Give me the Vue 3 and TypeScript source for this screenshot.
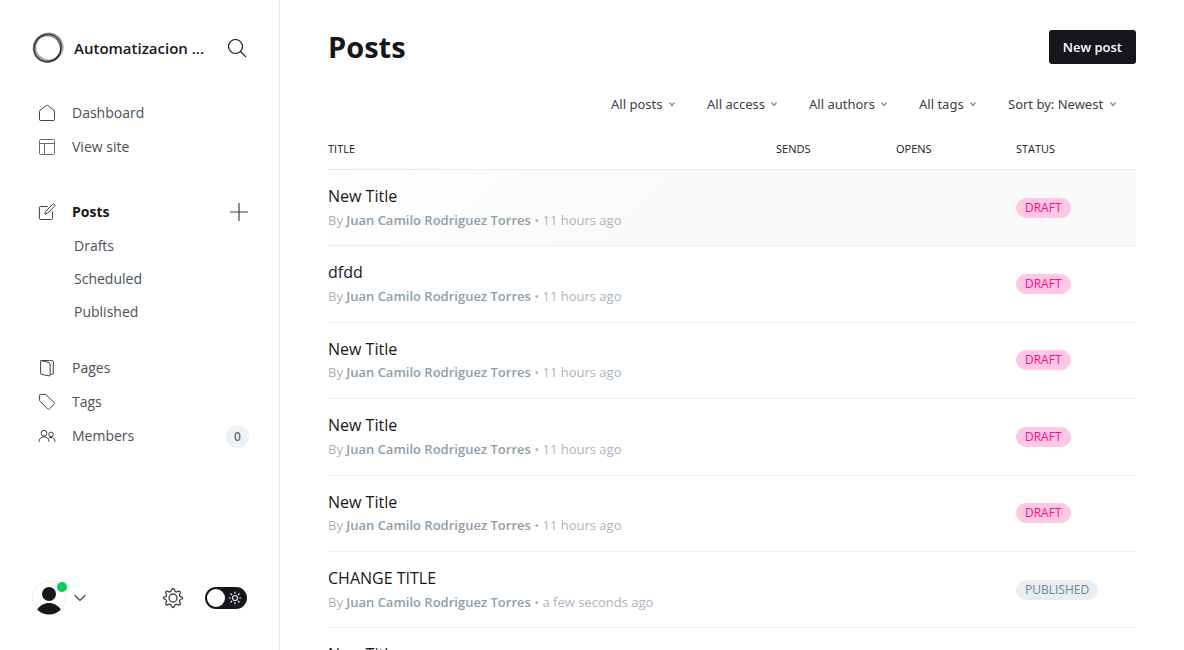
<script setup lang="ts">
import { ref } from 'vue'

interface Post {
  title: string
  author: string
  updated: string
  status: 'Draft' | 'Published'
  active?: boolean
}

const author = 'Juan Camilo Rodriguez Torres'

const posts: Post[] = [
  { title: 'New Title', author, updated: '11 hours ago', status: 'Draft', active: true },
  { title: 'dfdd', author, updated: '11 hours ago', status: 'Draft' },
  { title: 'New Title', author, updated: '11 hours ago', status: 'Draft' },
  { title: 'New Title', author, updated: '11 hours ago', status: 'Draft' },
  { title: 'New Title', author, updated: '11 hours ago', status: 'Draft' },
  { title: 'CHANGE TITLE', author, updated: 'a few seconds ago', status: 'Published' },
  { title: 'New Title', author, updated: '11 hours ago', status: 'Draft' },
]

const filters = [
  { name: 'type', label: 'Post type', value: 'All posts' },
  { name: 'access', label: 'Access', value: 'All access' },
  { name: 'author', label: 'Author', value: 'All authors' },
  { name: 'tag', label: 'Tag', value: 'All tags' },
  { name: 'order', label: 'Order', value: 'Sort by: Newest' },
]

const subPages = ['Drafts', 'Scheduled', 'Published']
const nightShift = ref(false)
</script>

<template>
  <div class="app">
    <aside class="sidebar">
      <header class="brand">
        <svg class="brand-logo" viewBox="0 0 32 32" aria-hidden="true">
          <g fill="none" stroke="#15171a">
            <ellipse cx="16.800" cy="15.200" rx="13.600" ry="13.400" stroke-width="2.400" stroke-opacity=".38" />
            <ellipse cx="15.200" cy="16.200" rx="13.600" ry="13.800" stroke-width="1.800" stroke-opacity=".5" />
            <ellipse cx="16" cy="15.800" rx="14.200" ry="12.800" stroke-width="1.400" stroke-opacity=".4" transform="rotate(-50 16 16)" />
            <ellipse cx="15.600" cy="17" rx="13.400" ry="13" stroke-width="1" stroke-opacity=".6" transform="rotate(24 16 16)" />
          </g>
        </svg>
        <span class="brand-name">Automatizacion ...</span>
        <button class="icon-button search" type="button" aria-label="Search">
          <svg width="20" height="20" viewBox="0 0 20 20" fill="none" stroke="#15171a" stroke-width="1.2" stroke-linecap="round">
            <circle cx="8.5" cy="8.5" r="7" />
            <path d="M13.5 13.5 18.6 18.6" />
          </svg>
        </button>
      </header>

      <nav class="nav">
        <ul class="group">
          <li>
            <a class="item" href="#dashboard">
              <svg viewBox="0 0 18 18"><path d="M1.5 7.2v8.3c0 .6.4 1 1 1h13c.6 0 1-.4 1-1V7.2c0-.4-.2-.7-.5-.9L9.6 1.4a1 1 0 0 0-1.2 0L2 6.3c-.3.2-.5.5-.5.9Z" /></svg>
              Dashboard
            </a>
          </li>
          <li>
            <a class="item view-site" href="#site">
              <svg viewBox="0 0 18 18"><rect x="1.500" y="1.500" width="15" height="15" rx="1" /><path d="M1.500 5.500h15M6.500 5.500v11" /></svg>
              View site
            </a>
          </li>
        </ul>

        <ul class="group posts">
          <li class="with-action">
            <a class="item current" href="#posts" aria-current="page">
              <svg viewBox="0 0 18 18"><path d="M9.500 3.500H2.400c-.6 0-1 .4-1 1v11c0 .6.4 1 1 1h11c.6 0 1-.4 1-1V8.500" /><path d="m7 11 .6-2.600 7-7a1.300 1.300 0 0 1 1.900 0 1.300 1.300 0 0 1 0 1.900l-7 7L7 11Z" /></svg>
              Posts
            </a>
            <button class="icon-button add" type="button" aria-label="Add post">
              <svg width="20" height="20" viewBox="0 0 20 20" fill="none" stroke="#394047" stroke-width="1.2"><path d="M10 1v18M1 10h18" /></svg>
            </button>
          </li>
          <li v-for="page in subPages" :key="page">
            <a class="sub-item" :href="'#' + page.toLowerCase()">{{ page }}</a>
          </li>
        </ul>

        <ul class="group">
          <li>
            <a class="item" href="#pages">
              <svg viewBox="0 0 18 18"><path d="M2.700 1.500h8.800l3.300.3c.3 0 .5.3.5.6v12.200c0 .4-.3.7-.7.7h-2.100" /><path d="M2.600 2.300v12.200c0 .3.200.6.500.7l8.100 1.700c.5.100.9-.2.900-.7V4.600c0-.4-.3-.8-.7-.9L3.100 1.600c-.3-.1-.5.2-.5.7Z" /></svg>
              Pages
            </a>
          </li>
          <li>
            <a class="item" href="#tags">
              <svg viewBox="0 0 18 18"><path d="M1.4 2.3v4.5c0 .5.2 1 .6 1.3l7.7 7.8c.5.5 1.2.5 1.7 0l4.7-4.7c.5-.5.5-1.2 0-1.7L8.3 1.9c-.3-.3-.7-.5-1.2-.5H2.3c-.5 0-.9.4-.9.9Z" /></svg>
              Tags
            </a>
          </li>
          <li class="with-action">
            <a class="item" href="#members">
              <svg viewBox="0 0 18 18"><circle cx="6" cy="6.200" r="2.900" /><circle cx="13" cy="7.400" r="2.300" /><path d="M1 14.800c0-3 2.100-5 5-5s5 2 5 5M10.600 11.300c.7-.6 1.500-.9 2.400-.9 2.300 0 4 1.700 4 4.400" /></svg>
              Members
            </a>
            <span class="count">0</span>
          </li>
        </ul>
      </nav>

      <footer class="account">
        <button class="user" type="button" aria-label="Account menu">
          <span class="avatar">
            <svg width="34" height="34" viewBox="0 0 34 34">
              <circle cx="17" cy="17" r="16.500" fill="#fff" stroke="#e9ecee" />
              <circle cx="17" cy="13" r="7" fill="#15171a" />
              <path d="M5.200 28.500C8 24.500 12 22 17 22s9 2.500 11.800 6.500A16.500 16.500 0 0 1 17 33.500 16.500 16.500 0 0 1 5.200 28.500Z" fill="#15171a" />
            </svg>
            <span class="online"></span>
          </span>
          <svg width="12" height="8" viewBox="0 0 12 8" fill="none" stroke="#394047" stroke-width="1.200" stroke-linecap="round"><path d="m1 1.500 5 5 5-5" /></svg>
        </button>
        <button class="icon-button settings" type="button" aria-label="Settings">
          <svg width="22" height="22" viewBox="0 0 22 22" fill="none" stroke="#394047" stroke-width="1.300" stroke-linejoin="round">
            <path d="M9.700 2.500a1.400 1.400 0 0 1 2.600 0l.5 1.300a1.700 1.700 0 0 0 2.300 1l1.300-.6a1.400 1.400 0 0 1 1.800 1.800l-.6 1.300a1.700 1.700 0 0 0 1 2.300l1.300.5a1 1 0 0 1 0 1.900l-1.300.5a1.700 1.700 0 0 0-1 2.300l.6 1.300a1.400 1.400 0 0 1-1.800 1.800l-1.300-.6a1.700 1.700 0 0 0-2.300 1l-.5 1.300a1.400 1.400 0 0 1-2.600 0l-.5-1.300a1.700 1.700 0 0 0-2.300-1l-1.300.6a1.400 1.400 0 0 1-1.800-1.800l.6-1.300a1.700 1.700 0 0 0-1-2.300l-1.300-.5a1 1 0 0 1 0-1.900l1.300-.5a1.700 1.700 0 0 0 1-2.300l-.6-1.300a1.400 1.400 0 0 1 1.800-1.800l1.300.6a1.700 1.700 0 0 0 2.300-1Z" />
            <circle cx="11" cy="11" r="4" />
          </svg>
        </button>
        <label class="theme">
          <input v-model="nightShift" type="checkbox" aria-label="Night shift" />
          <svg width="14" height="14" viewBox="0 0 14 14" fill="none" stroke="#fff" stroke-opacity=".9" stroke-width="1.200">
            <circle cx="7" cy="7" r="2.500" />
            <path d="M7 .8v2M7 11.200v2M.8 7h2M11.200 7h2M2.500 2.500l1.500 1.500M10 10l1.500 1.500M2.500 11.500l1.500-1.500M10 4l1.500-1.500" />
          </svg>
        </label>
      </footer>
    </aside>

    <main class="main">
      <header class="heading">
        <h1>Posts</h1>
        <a class="new-post" href="#new">New post</a>
      </header>

      <div class="filters">
        <label v-for="filter in filters" :key="filter.name" class="filter">
          <select :name="filter.name" :aria-label="filter.label">
            <option>{{ filter.value }}</option>
          </select>
          <svg width="8" height="6" viewBox="0 0 8 6" fill="none" stroke="#7c8b9a" stroke-width="1.200" aria-hidden="true"><path d="m1.500 1.500 2.500 3 2.500-3" /></svg>
        </label>
      </div>

      <table class="posts-table">
        <thead>
          <tr>
            <th scope="col">Title</th>
            <th scope="col" class="metric">Sends</th>
            <th scope="col" class="metric">Opens</th>
            <th scope="col" class="metric">Status</th>
          </tr>
        </thead>
        <tbody>
          <tr v-for="(post, index) in posts" :key="index" :class="{ active: post.active }">
            <td>
              <a class="post-link" href="#post">
                <h3>{{ post.title }}</h3>
                <p>By <strong>{{ post.author }}</strong> • {{ post.updated }}</p>
              </a>
            </td>
            <td></td>
            <td></td>
            <td><span class="badge" :class="post.status.toLowerCase()">{{ post.status }}</span></td>
          </tr>
        </tbody>
      </table>
    </main>
  </div>
</template>

<style>
body {
  margin: 0;
  background: #fff;
}
</style>

<style scoped>
* {
  box-sizing: border-box;
}

.app {
  display: flex;
  height: 100vh;
  color: #15171a;
  font-family: "Segoe UI", "Open Sans", "Noto Sans", sans-serif;
  font-size: 14px;
  line-height: 1.6;
}

a {
  color: inherit;
  text-decoration: none;
}

button {
  padding: 0;
  border: 0;
  background: none;
  font: inherit;
  color: inherit;
  cursor: pointer;
}

svg {
  display: block;
  flex: none;
}

.sidebar {
  display: flex;
  flex: none;
  flex-direction: column;
  width: 280px;
  border-right: 1px solid #e6e9eb;
}

.brand {
  display: flex;
  align-items: center;
  height: 96px;
  padding: 0 32px;
}

.brand-logo {
  width: 32px;
  height: 32px;
}

.brand-name {
  flex: 1;
  min-width: 0;
  margin: 0 10px;
  font-size: 15px;
  font-weight: 600;
  line-height: 22px;
  white-space: nowrap;
}

.nav {
  flex: 1;
}

.group {
  margin: 0 0 31px;
  padding: 0;
  list-style: none;
}

.group.posts {
  margin-bottom: 22px;
}

.posts .with-action {
  margin-bottom: 1px;
}

.with-action {
  display: flex;
  align-items: center;
  padding-right: 30px;
}

.with-action .item {
  flex: 1;
}

.item {
  display: flex;
  align-items: center;
  gap: 16px;
  height: 34px;
  padding-left: 38px;
  color: #4a5158;
}

.item svg {
  width: 18px;
  height: 18px;
  fill: none;
  stroke: #394047;
  stroke-linejoin: round;
}

.item.view-site svg {
  stroke: #626d79;
}

.item.current {
  color: #15171a;
  font-weight: 700;
}

.sub-item {
  display: flex;
  align-items: center;
  height: 33px;
  padding-left: 74px;
  color: #4a5158;
}

.count {
  width: 23px;
  height: 23px;
  border-radius: 12px;
  background: #eff2f4;
  color: #5d6b78;
  font-size: 12px;
  font-weight: 600;
  line-height: 23px;
  text-align: center;
}

.account {
  display: flex;
  align-items: center;
  padding: 0 32px 35px;
}

.user {
  display: flex;
  align-items: center;
  gap: 8px;
  margin-right: auto;
}

.avatar {
  position: relative;
}

.online {
  position: absolute;
  top: 1px;
  right: -1px;
  width: 10px;
  height: 10px;
  border-radius: 50%;
  background: #00d154;
}

.theme {
  display: flex;
  align-items: center;
  justify-content: space-between;
  width: 42px;
  height: 22px;
  margin-left: 21px;
  padding: 0 5px 0 2px;
  border-radius: 11px;
  background: #15171a;
  cursor: pointer;
}

.theme input {
  width: 18px;
  height: 18px;
  margin: 0;
  border-radius: 50%;
  background: #fff;
  appearance: none;
}

.theme:has(input:checked) {
  flex-direction: row-reverse;
}

.main {
  flex: 1;
  min-width: 0;
  padding: 0 48px;
  overflow-y: auto;
  scrollbar-width: none;
}

.heading {
  display: flex;
  align-items: center;
  justify-content: space-between;
  height: 94px;
}

h1 {
  margin: 0;
  font-size: 29px;
  font-weight: 700;
}

.new-post {
  padding: 0 14px;
  border-radius: 3px;
  background: #15171a;
  color: #fff;
  font-size: 13px;
  font-weight: 600;
  line-height: 34px;
}

.filters {
  display: flex;
  justify-content: flex-end;
  gap: 31px;
  padding-right: 19px;
}

.filter {
  display: flex;
  align-items: center;
  gap: 5px;
}

.filter select {
  height: 20px;
  margin: 0;
  padding: 0;
  border: 0;
  background: none;
  color: #394047;
  font-family: "Segoe UI", "Noto Sans", sans-serif;
  font-size: 13px;
  line-height: 20px;
  appearance: none;
}

.posts-table {
  width: 100%;
  margin-top: 14px;
  border-collapse: separate;
  border-spacing: 0;
  table-layout: fixed;
}

th {
  height: 42px;
  padding: 0;
  border-bottom: 1px solid #e6e9eb;
  font-size: 11px;
  font-weight: 500;
  text-align: left;
  text-transform: uppercase;
}

.metric {
  width: 120px;
}

td {
  padding: 0;
  border-bottom: 1px solid #ebeef0;
}

tr.active {
  background: linear-gradient(315deg, #fafafa 60%, #fff 100%);
}

.post-link {
  display: block;
  padding: 14px 0 15px;
}

h3 {
  margin: 0;
  font-size: 16px;
  font-weight: 500;
}

p {
  margin: 0;
  color: #abb4be;
  font-size: 13px;
}

p strong {
  color: #8e9eaa;
  font-weight: 600;
}

.badge {
  display: block;
  width: fit-content;
  padding: 0 9px;
  border-radius: 10px;
  font-size: 12px;
  font-weight: 500;
  line-height: 20px;
  text-transform: uppercase;
}

.badge.draft {
  background: #ffc7e4;
  color: #fb0d86;
}

.badge.published {
  background: #e9eef2;
  color: #738393;
}
</style>
